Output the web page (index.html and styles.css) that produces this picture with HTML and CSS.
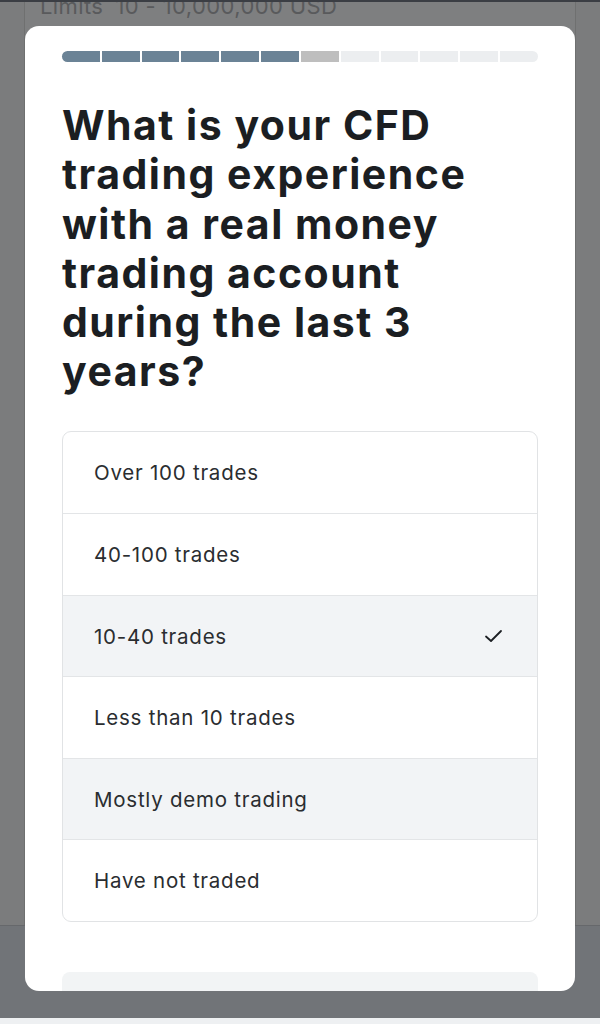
FILE: index.html
```html
<!DOCTYPE html>
<html>
<head>
<meta charset="utf-8">
<link rel="stylesheet" href="styles.css">
</head>
<body>
<div class="page">
  <div class="topbar"></div>
  <div class="bgpanel">
    <div class="limits"><span class="lim-label">Limits</span><span>10 - 10,000,000 USD</span></div>
  </div>
  <div class="bgbottom"></div>
  <div class="bgstrip"></div>

  <div class="modal">
    <div class="progress">
      <span class="seg done"></span><span class="seg done"></span><span class="seg done"></span><span class="seg done"></span><span class="seg done"></span><span class="seg done"></span><span class="seg current"></span><span class="seg"></span><span class="seg"></span><span class="seg"></span><span class="seg"></span><span class="seg"></span>
    </div>
    <h1 class="title">What is your CFD<br>trading experience<br>with a real money<br>trading account<br>during the last 3<br>years?</h1>
    <div class="options">
      <div class="option">Over 100 trades</div>
      <div class="option">40-100 trades</div>
      <div class="option selected">10-40 trades
        <svg class="check" width="20" height="16" viewBox="0 0 20 16"><path d="M2 8.5 L7 13 L17 3" fill="none" stroke="#1c1f23" stroke-width="1.8" stroke-linecap="round" stroke-linejoin="round"/></svg>
      </div>
      <div class="option">Less than 10 trades</div>
      <div class="option hover">Mostly demo trading</div>
      <div class="option">Have not traded</div>
    </div>
    <div class="button"></div>
  </div>
</div>
</body>
</html>
```
FILE: styles.css
```css
html, body {
  margin: 0;
  padding: 0;
}
body {
  background: #7b7c7d;
  font-family: Inter, "Noto Sans", "Liberation Sans", sans-serif;
  overflow: hidden;
}
.page {
  position: relative;
  width: 600px;
  height: 1024px;
  display: flex;
  flex-direction: column;
}
.topbar {
  height: 2px;
  background: #3b3e44;
}
.bgpanel {
  height: 923px;
  margin: 0 24px;
  border-left: 1px solid #6f7070;
  border-right: 1px solid #6f7070;
  background: #7e7f80;
  overflow: hidden;
}
.limits {
  margin-top: -8px;
  padding-left: 15px;
  font-size: 22px;
  color: #595a5c;
  line-height: 24px;
  display: flex;
  gap: 12px;
  letter-spacing: 0.4px;
}
.bgbottom {
  height: 92px;
  background: #717478;
  border-top: 1px solid #66686b;
}
.bgstrip {
  flex: 1;
  background: #eef0f2;
}
.modal {
  position: absolute;
  top: 26px;
  left: 25px;
  width: 550px;
  height: 965px;
  background: #ffffff;
  border-radius: 14px;
  overflow: hidden;
  box-sizing: border-box;
  padding: 25px 37px 0 37px;
  display: flex;
  flex-direction: column;
}
.progress {
  display: flex;
  gap: 2px;
  height: 11px;
  flex: none;
}
.seg {
  flex: 1;
  background: #eceef0;
}
.seg:first-child { border-radius: 6px 0 0 6px; }
.seg:last-child { border-radius: 0 6px 6px 0; }
.seg.done { background: #6b8396; }
.seg.current { background: #bebebe; }
.title {
  flex: none;
  margin: 39px 0 0 0;
  font-family: Inter, "Noto Sans", sans-serif;
  font-weight: 700;
  font-size: 41px;
  line-height: 49.3px;
  letter-spacing: 1.5px;
  color: #1b1e22;
}
.options {
  flex: none;
  margin-top: 34px;
  border: 1px solid #e1e3e5;
  border-radius: 9px;
  overflow: hidden;
  display: flex;
  flex-direction: column;
}
.option {
  flex: none;
  height: 81.5px;
  box-sizing: border-box;
  display: flex;
  align-items: center;
  justify-content: space-between;
  padding: 0 33px 0 31px;
  font-size: 20.5px;
  color: #2a2d30;
  letter-spacing: 0.75px;
}
.option + .option {
  border-top: 1px solid #e3e5e7;
}
.option.selected, .option.hover {
  background: #f2f4f6;
}
.check {
  display: block;
}
.button {
  margin-top: 50px;
  height: 48px;
  flex: none;
  background: #f2f4f5;
  border-radius: 8px;
}
```
